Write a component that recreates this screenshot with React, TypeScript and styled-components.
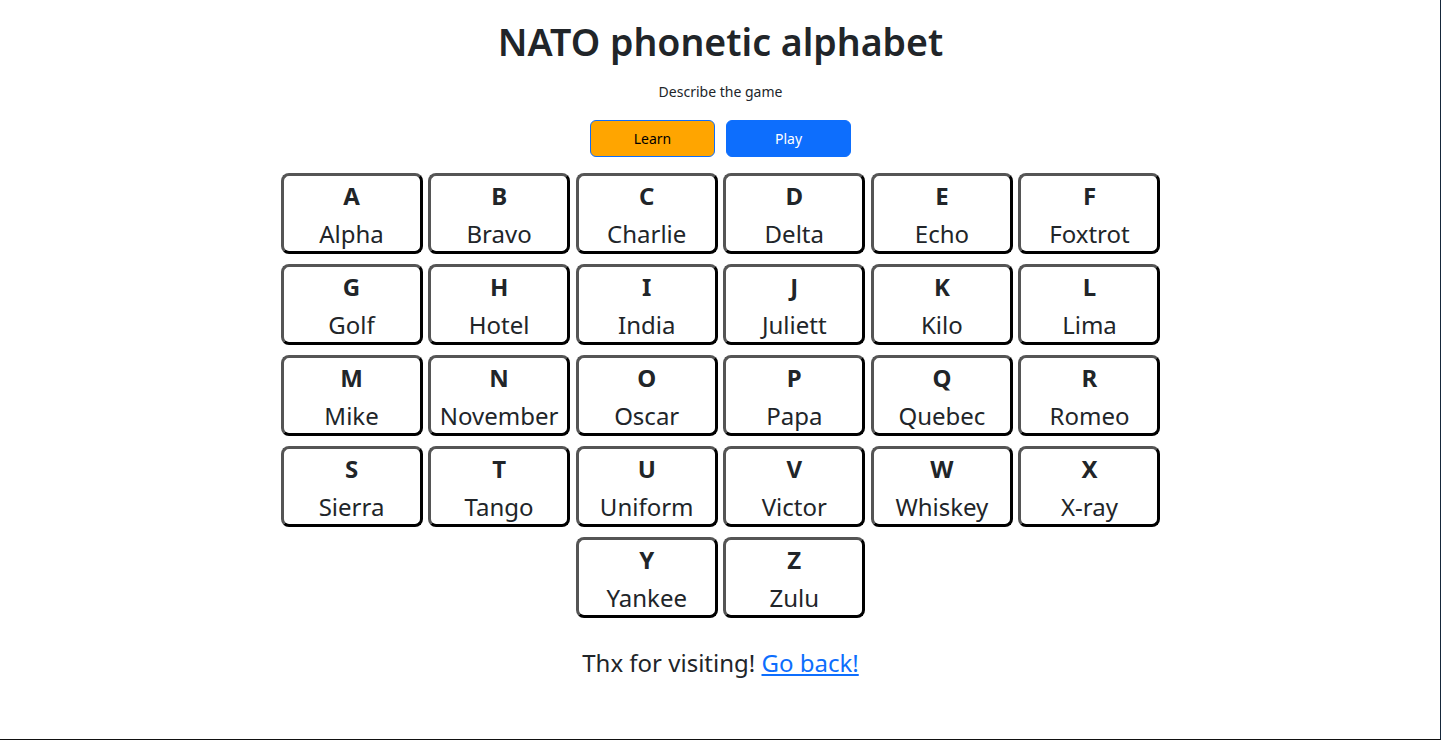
import styled, { createGlobalStyle } from 'styled-components'

const GlobalStyle = createGlobalStyle`
  body {
    margin: 0;
    background: #ffffff;
    color: #212529;
    font-family: "Noto Sans", "Open Sans", sans-serif;
  }
`

const Frame = styled.div`
  position: fixed;
  inset: 0;
  border-right: 1px solid #15263a;
  border-bottom: 1px solid #111111;
  pointer-events: none;
`

const Page = styled.main`
  display: flex;
  flex-direction: column;
  align-items: center;
  padding-top: 18px;
`

const Title = styled.h1`
  margin: 0;
  font-size: 37.5px;
  font-weight: 600;
  line-height: 48px;
`

const Subtitle = styled.p`
  margin: 16px 0 0;
  font-size: 14px;
  line-height: 20px;
`

const ButtonRow = styled.div`
  display: flex;
  gap: 11px;
  margin-top: 18px;
`

const ModeButton = styled.button<{ $active?: boolean }>`
  width: 125px;
  height: 37px;
  border-radius: 6px;
  font-family: inherit;
  font-size: 14px;
  border: 1px solid #0d6efd;
  background: ${p => (p.$active ? '#ffa500' : '#0d6efd')};
  color: ${p => (p.$active ? '#000000' : '#ffffff')};
  cursor: pointer;
`

const Board = styled.div`
  width: 880px;
  display: flex;
  flex-wrap: wrap;
  justify-content: center;
  gap: 10px 5.6px;
  margin-top: 16px;
`

const Card = styled.div`
  box-sizing: border-box;
  width: 142px;
  height: 81px;
  border: 3px solid;
  border-color: #555555 #000000 #000000 #555555;
  border-radius: 8px;
  display: flex;
  flex-direction: column;
  align-items: center;
  padding-top: 2px;
`

const Letter = styled.div`
  font-size: 24px;
  font-weight: 700;
  line-height: 36px;
`

const Word = styled.div`
  font-size: 24px;
  line-height: 39px;
`

const Footer = styled.p`
  margin: 27px 0 0;
  font-size: 24px;
  line-height: 36px;

  a {
    color: #0d6efd;
    text-decoration: underline;
  }
`

const words = [
  'Alpha', 'Bravo', 'Charlie', 'Delta', 'Echo', 'Foxtrot', 'Golf', 'Hotel', 'India',
  'Juliett', 'Kilo', 'Lima', 'Mike', 'November', 'Oscar', 'Papa', 'Quebec', 'Romeo',
  'Sierra', 'Tango', 'Uniform', 'Victor', 'Whiskey', 'X-ray', 'Yankee', 'Zulu',
]

const App = () => {
  return (
    <>
      <GlobalStyle />
      <Page>
        <Title>NATO phonetic alphabet</Title>
        <Subtitle>Describe the game</Subtitle>
        <ButtonRow>
          <ModeButton $active>Learn</ModeButton>
          <ModeButton>Play</ModeButton>
        </ButtonRow>
        <Board>
          {words.map(w => (
            <Card key={w}>
              <Letter>{w[0]}</Letter>
              <Word>{w}</Word>
            </Card>
          ))}
        </Board>
        <Footer>
          Thx for visiting! <a href="#">Go back!</a>
        </Footer>
      </Page>
      <Frame />
    </>
  )
}

export default App
